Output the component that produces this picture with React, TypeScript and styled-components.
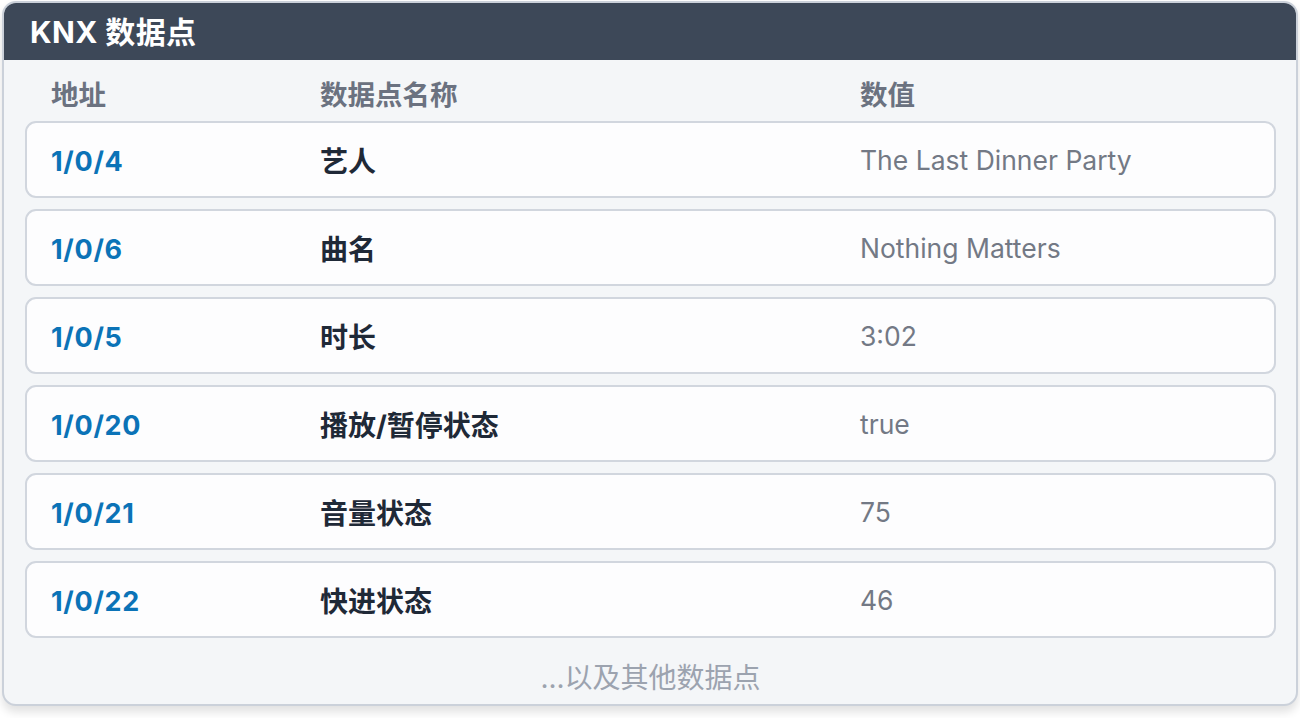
import React from "react";
import styled, { createGlobalStyle } from "styled-components";

const Global = createGlobalStyle`
  html, body { margin: 0; padding: 0; background: #ffffff; }
  body { font-family: Inter, "Noto Sans CJK SC", sans-serif; }
  * { box-sizing: border-box; }
`;

const Page = styled.div`
  padding: 1px 2px 2px;
  width: 1300px;
  height: 718px;
`;

const Card = styled.section`
  width: 1296px;
  height: 705px;
  border: 2px solid #cbd1da;
  border-radius: 14px;
  overflow: hidden;
  background: #f4f6f8;
  box-shadow: 0 6px 10px rgba(0, 0, 0, 0.12);
  display: flex;
  flex-direction: column;
`;

const Header = styled.header`
  height: 57px;
  background: #3d4858;
  display: flex;
  align-items: center;
  padding: 0 26px 3px;
  flex-shrink: 0;
`;

const Title = styled.h1`
  margin: 0;
  color: #ffffff;
  font-size: 30px;
  font-weight: 700;
  font-family: Inter, "Noto Sans CJK SC", sans-serif;
  letter-spacing: 0.4px;
`;

const Body = styled.div`
  padding: 0 20px 0 21px;
  display: flex;
  flex-direction: column;
  flex: 1;
`;

const Grid = styled.div`
  display: grid;
  grid-template-columns: 269px 540px 1fr;
  align-items: center;
`;

const LabelRow = styled(Grid)`
  padding: 0 26px;
  height: 61px;
  padding-top: 5px;
`;

const Label = styled.div`
  font-size: 27.5px;
  font-weight: 700;
  color: #6b7280;
  font-family: Inter, "Noto Sans CJK SC", sans-serif;
`;

const List = styled.div`
  display: flex;
  flex-direction: column;
  gap: 11px;
`;

const Row = styled(Grid)`
  height: 77px;
  border: 2px solid #d1d6de;
  border-radius: 11px;
  background: #fdfdfe;
  padding: 0 24px;
`;

const Address = styled.div`
  font-size: 27px;
  font-weight: 700;
  color: #0b73b7;
  letter-spacing: 0.7px;
  padding-top: 3px;
  font-family: Inter, sans-serif;
`;

const Name = styled.div`
  font-size: 28px;
  font-weight: 700;
  color: #1f2937;
  font-family: Inter, "Noto Sans CJK SC", sans-serif;
`;

const Value = styled.div`
  font-size: 26.5px;
  font-weight: 400;
  color: #737985;
  padding-top: 1px;
  font-family: Inter, "Noto Sans CJK SC", sans-serif;
`;

const Footer = styled.div`
  text-align: center;
  padding-top: 24px;
  font-size: 28px;
  line-height: 32px;
  color: #9ca3af;
  font-family: Inter, "Noto Sans CJK SC", sans-serif;
`;

const rows = [
  { addr: "1/0/4", name: "艺人", value: "The Last Dinner Party" },
  { addr: "1/0/6", name: "曲名", value: "Nothing Matters" },
  { addr: "1/0/5", name: "时长", value: "3:02" },
  { addr: "1/0/20", name: "播放/暂停状态", value: "true" },
  { addr: "1/0/21", name: "音量状态", value: "75" },
  { addr: "1/0/22", name: "快进状态", value: "46" },
];

export default function App() {
  return (
    <Page>
      <Global />
      <Card>
        <Header>
          <Title>KNX 数据点</Title>
        </Header>
        <Body>
          <LabelRow>
            <Label>地址</Label>
            <Label>数据点名称</Label>
            <Label>数值</Label>
          </LabelRow>
          <List>
            {rows.map((r) => (
              <Row key={r.addr}>
                <Address>{r.addr}</Address>
                <Name>{r.name}</Name>
                <Value>{r.value}</Value>
              </Row>
            ))}
          </List>
          <Footer>...以及其他数据点</Footer>
        </Body>
      </Card>
    </Page>
  );
}
